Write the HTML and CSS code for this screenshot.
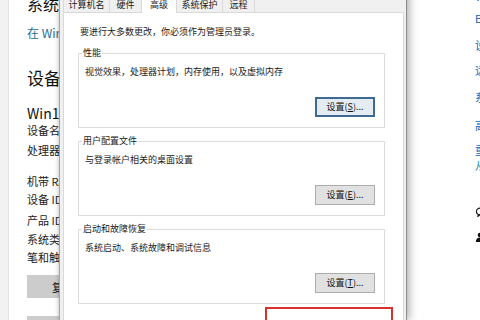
FILE: index.html
```html
<!DOCTYPE html>
<html lang="zh-CN">
<head>
<meta charset="utf-8">
<title>系统属性</title>
<link rel="stylesheet" href="styles.css">
</head>
<body>
<div class="page">
  <div class="nav"></div>
  <div class="main">
    <div class="main-col">
      <div class="l-title">系统信息</div>
      <div class="l-link">在 Windows 安全中心</div>
      <div class="l-h2">设备规格</div>
      <div class="l-h3">Win10-PC</div>
      <div class="l-row r1">设备名称</div>
      <div class="l-row r2">处理器</div>
      <div class="l-row r3">机带 RAM</div>
      <div class="l-row r4">设备 ID</div>
      <div class="l-row r5">产品 ID</div>
      <div class="l-row r6">系统类型</div>
      <div class="l-row r7">笔和触控</div>
      <button class="l-btn b1">复制</button>
      <button class="l-btn b2">重命名</button>
    </div>
  </div>
  <div class="side">
    <div class="s-head">相关设置</div>
    <div class="s-link k1">BitLocker 设置</div>
    <div class="s-link k2">设备管理器</div>
    <div class="s-link k3">远程桌面</div>
    <div class="s-link k4">系统保护</div>
    <div class="s-link k5">高级系统设置</div>
    <div class="s-link k6">重命名这台电脑</div>
    <div class="s-link k7 teal">从 Web 获取帮助</div>
    <div class="s-icon i1">
      <svg width="10" height="10" viewBox="0 0 10 10"><path d="M5 1.2a3.6 3.2 0 1 0 0.1 6.4l-2.2 1.8 0.5-2.3" fill="none" stroke="#1a1a1a" stroke-width="1.2"/></svg>
    </div>
    <div class="s-icon i2">
      <svg width="10" height="10" viewBox="0 0 10 10"><circle cx="5" cy="3" r="2.3" fill="#111"/><path d="M0.8 10c0-3 1.9-4.4 4.2-4.4s4.2 1.4 4.2 4.4z" fill="#111"/></svg>
    </div>
  </div>
</div>

<div class="dialog">
  <div class="tabs">
    <div class="tab w46">计算机名</div>
    <div class="tab w32">硬件</div>
    <div class="tab sel">高级</div>
    <div class="tab w46">系统保护</div>
    <div class="tab w32">远程</div>
  </div>
  <div class="panel">
    <div class="intro">要进行大多数更改，你必须作为管理员登录。</div>
    <fieldset class="group">
      <legend>性能</legend>
      <div class="desc">视觉效果，处理器计划，内存使用，以及虚拟内存</div>
      <div class="btn-row"><button class="btn default">设置(<u>S</u>)...</button></div>
    </fieldset>
    <fieldset class="group">
      <legend>用户配置文件</legend>
      <div class="desc">与登录帐户相关的桌面设置</div>
      <div class="btn-row"><button class="btn">设置(<u>E</u>)...</button></div>
    </fieldset>
    <fieldset class="group last">
      <legend>启动和故障恢复</legend>
      <div class="desc">系统启动、系统故障和调试信息</div>
      <div class="btn-row"><button class="btn">设置(<u>T</u>)...</button></div>
    </fieldset>
    <div class="highlight">
      <button class="btn wide">环境变量(<u>N</u>)...</button>
    </div>
  </div>
</div>
</body>
</html>
```

FILE: styles.css
```css
html, body {
  margin: 0;
  padding: 0;
}
body {
  width: 480px;
  height: 320px;
  overflow: hidden;
  position: relative;
  background: #ffffff;
  font-family: "Noto Sans CJK SC", "Noto Sans", sans-serif;
  color: #1a1a1a;
}
button {
  font-family: inherit;
}

/* ---------- background settings page ---------- */
.page {
  display: flex;
  height: 320px;
  overflow: hidden;
}
.nav {
  flex: 0 0 8px;
  background: #f2f2f2;
  border-right: 1px solid #e4e4e4;
}
.main {
  flex: 1;
  min-width: 0;
}
.main-col {
  width: 33px;
  height: 320px;
  padding-left: 18px;
  overflow: hidden;
  white-space: nowrap;
}
.l-title {
  font-size: 16px;
  line-height: 20px;
  margin-top: -6px;
  color: #111;
}
.l-link {
  font-size: 12px;
  line-height: 16px;
  margin-top: 11px;
  color: #2b6c8e;
}
.l-h2 {
  font-size: 17px;
  line-height: 24px;
  margin-top: 25px;
  color: #111;
}
.l-h3 {
  font-size: 14px;
  line-height: 16px;
  margin-top: 15px;
  color: #111;
}
.l-row {
  font-size: 11px;
  line-height: 16px;
  color: #222;
}
.r1 { margin-top: 1px; }
.r2 { margin-top: 4px; }
.r3 { margin-top: 15px; }
.r4 { margin-top: 2px; }
.r5 { margin-top: 5px; }
.r6 { margin-top: 3px; }
.r7 { margin-top: 2px; }
.l-btn {
  display: block;
  width: 72px;
  height: 23px;
  border: none;
  background: #cccccc;
  font-size: 11px;
  color: #111;
  padding: 0;
}
.b1 { margin-top: 10px; }
.b2 { margin-top: 18px; }

.side {
  flex: 0 0 5px;
  min-width: 0;
  height: 320px;
  overflow: hidden;
  white-space: nowrap;
  font-size: 11px;
  line-height: 14px;
}
.s-head {
  margin-top: -12px;
  color: #111;
  font-size: 12px;
}
.s-link {
  color: #0a64b0;
}
.teal { color: #2f8aa8; }
.k1 { margin-top: 9px; }
.k2 { margin-top: 13px; }
.k3 { margin-top: 11px; }
.k4 { margin-top: 13px; }
.k5 { margin-top: 14px; }
.k6 { margin-top: 11px; }
.k7 { margin-top: 1px; }
.s-icon {
  height: 10px;
}
.s-icon svg { display: block; }
.i1 { margin-top: 35px; }
.i2 { margin-top: 15px; }

/* ---------- dialog window ---------- */
.dialog {
  position: absolute;
  left: 59px;
  top: -10px;
  width: 348px;
  height: 330px;
  box-sizing: border-box;
  background: #f0f0f0;
  border-left: 1px solid #a6a6a6;
  border-right: 1px solid #8c8c8c;
  padding: 0 2px 0 3px;
  box-shadow: 3px 0 8px rgba(0, 0, 0, 0.28), -1px 0 3px rgba(0, 0, 0, 0.12);
}
.tabs {
  display: flex;
  align-items: flex-end;
  height: 22px;
}
.tab {
  box-sizing: border-box;
  height: 22px;
  border: 1px solid #d9d9d9;
  border-bottom: none;
  background: #f0f0f0;
  font-size: 9px;
  line-height: 12px;
  padding-top: 8px;
  text-align: center;
  color: #1a1a1a;
  margin-right: -1px;
}
.w46 { width: 47px; }
.w32 { width: 33px; }
.tab.sel {
  width: 36px;
  height: 24px;
  margin-bottom: -1px;
  background: #ffffff;
  position: relative;
  z-index: 1;
  padding-top: 9px;
}
.panel {
  width: 341px;
  height: 308px;
  box-sizing: border-box;
  overflow: hidden;
  background: #ffffff;
  border: 1px solid #d9d9d9;
  border-bottom: none;
  padding: 12px 18px 0 14px;
}
.intro {
  font-size: 9px;
  line-height: 14px;
  margin-left: 2px;
  color: #1a1a1a;
}
.group {
  margin: 0 0 7px;
  padding: 6px 9px 10px 6px;
  border: 1px solid #dcdcdc;
  min-width: 0;
}
.group:first-of-type {
  margin-top: 8px;
}
.group.last {
  margin-bottom: 3px;
}
.group legend {
  font-size: 9px;
  line-height: 12px;
  padding: 0 1px;
  margin-left: -3px;
  color: #1a1a1a;
}
.desc {
  font-size: 9px;
  line-height: 14px;
  color: #1a1a1a;
}
.btn-row {
  display: flex;
  justify-content: flex-end;
  margin-top: 18px;
}
.btn {
  box-sizing: border-box;
  width: 60px;
  height: 20px;
  padding: 0;
  background: #e1e1e1;
  border: 1px solid #adadad;
  font-size: 9px;
  line-height: 16px;
  color: #111;
}
.btn u {
  text-decoration: underline;
}
.btn.default {
  border: 2px solid #3d6b93;
  background: #e4ebf1;
}
.highlight {
  box-sizing: border-box;
  width: 128px;
  margin-left: auto;
  margin-right: -8px;
  border: 2px solid #d7322c;
  padding: 8px 6px 0 11px;
  height: 40px;
}
.btn.wide {
  width: 100%;
}
```
